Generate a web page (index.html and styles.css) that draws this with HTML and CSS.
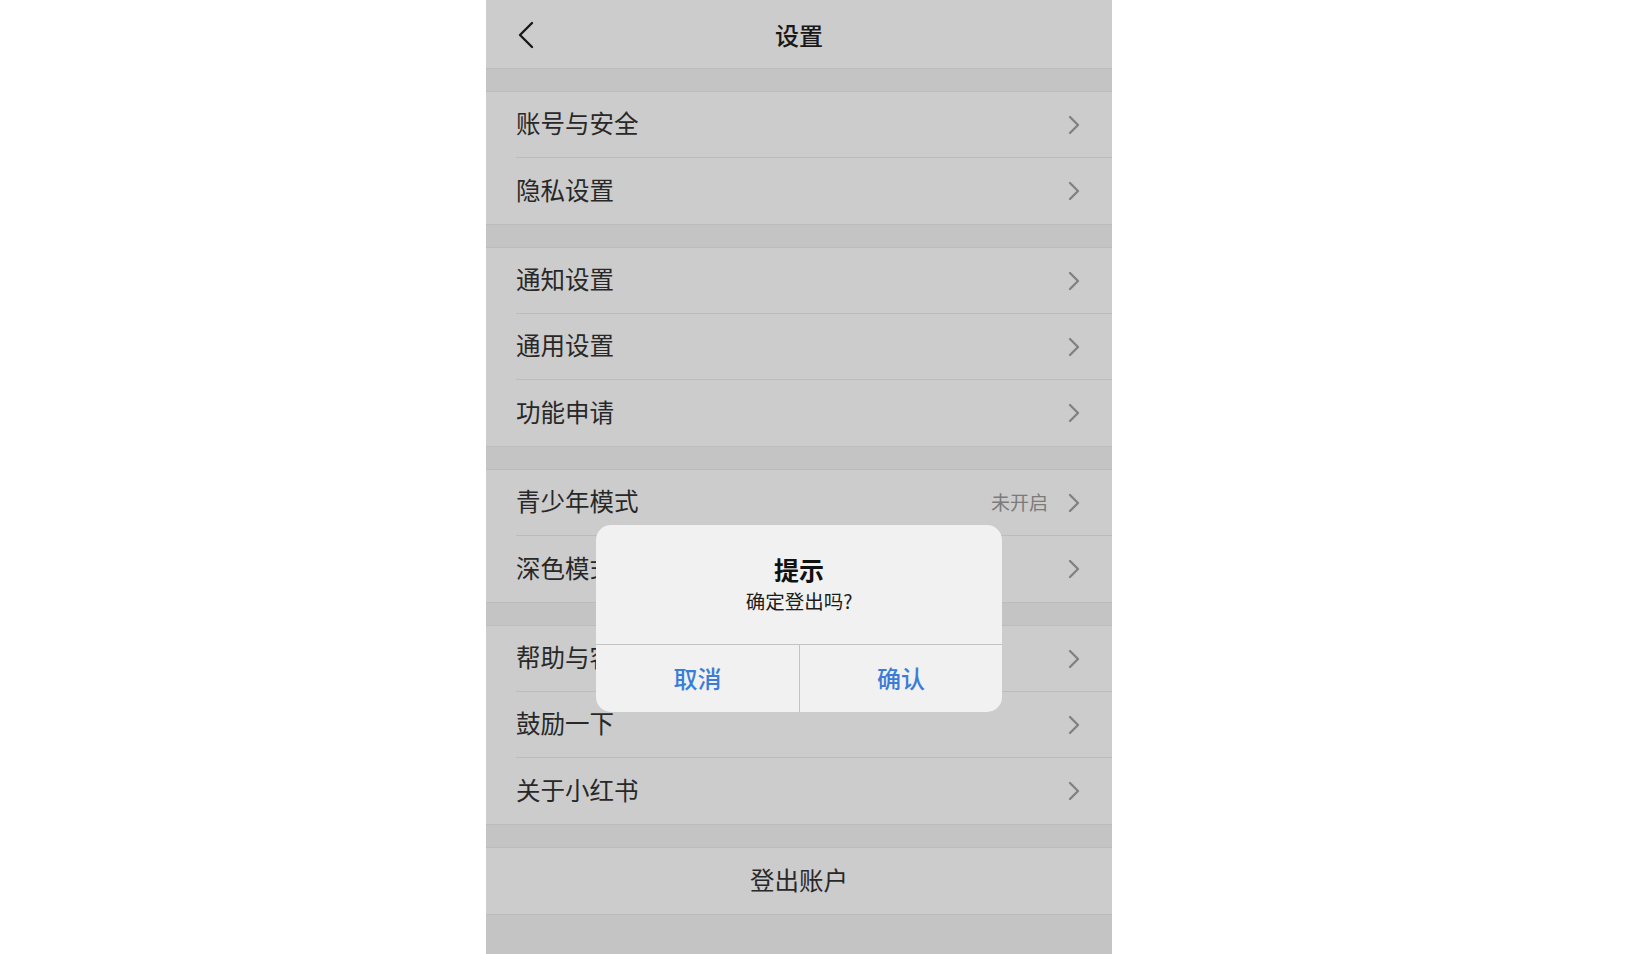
FILE: index.html
```html
<!DOCTYPE html>
<html lang="zh-CN">
<head>
<meta charset="utf-8">
<title>设置</title>
<link rel="stylesheet" href="styles.css">
</head>
<body>
<div class="stage">
  <div class="phone">
    <header class="topbar">
      <div class="topbar-left">
        <svg class="back" width="18" height="28" viewBox="0 0 18 28"><polyline points="15,2 3,14 15,26" fill="none" stroke="#1f1f1f" stroke-width="2.4" stroke-linecap="round" stroke-linejoin="round"/></svg>
      </div>
      <div class="topbar-title">设置</div>
      <div class="topbar-right"></div>
    </header>

    <section class="group">
      <div class="row"><span class="label">账号与安全</span><span class="trail"><svg class="chev" width="12" height="20" viewBox="0 0 12 20"><polyline points="2,2 10,10 2,18" fill="none" stroke="#a2a2a2" stroke-width="2.3" stroke-linecap="round" stroke-linejoin="round"/></svg></span></div>
      <div class="row"><span class="label">隐私设置</span><span class="trail"><svg class="chev" width="12" height="20" viewBox="0 0 12 20"><polyline points="2,2 10,10 2,18" fill="none" stroke="#a2a2a2" stroke-width="2.3" stroke-linecap="round" stroke-linejoin="round"/></svg></span></div>
    </section>

    <section class="group">
      <div class="row"><span class="label">通知设置</span><span class="trail"><svg class="chev" width="12" height="20" viewBox="0 0 12 20"><polyline points="2,2 10,10 2,18" fill="none" stroke="#a2a2a2" stroke-width="2.3" stroke-linecap="round" stroke-linejoin="round"/></svg></span></div>
      <div class="row"><span class="label">通用设置</span><span class="trail"><svg class="chev" width="12" height="20" viewBox="0 0 12 20"><polyline points="2,2 10,10 2,18" fill="none" stroke="#a2a2a2" stroke-width="2.3" stroke-linecap="round" stroke-linejoin="round"/></svg></span></div>
      <div class="row"><span class="label">功能申请</span><span class="trail"><svg class="chev" width="12" height="20" viewBox="0 0 12 20"><polyline points="2,2 10,10 2,18" fill="none" stroke="#a2a2a2" stroke-width="2.3" stroke-linecap="round" stroke-linejoin="round"/></svg></span></div>
    </section>

    <section class="group">
      <div class="row"><span class="label">青少年模式</span><span class="trail"><span class="value">未开启</span><svg class="chev" width="12" height="20" viewBox="0 0 12 20"><polyline points="2,2 10,10 2,18" fill="none" stroke="#a2a2a2" stroke-width="2.3" stroke-linecap="round" stroke-linejoin="round"/></svg></span></div>
      <div class="row"><span class="label">深色模式</span><span class="trail"><svg class="chev" width="12" height="20" viewBox="0 0 12 20"><polyline points="2,2 10,10 2,18" fill="none" stroke="#a2a2a2" stroke-width="2.3" stroke-linecap="round" stroke-linejoin="round"/></svg></span></div>
    </section>

    <section class="group">
      <div class="row"><span class="label">帮助与客服</span><span class="trail"><svg class="chev" width="12" height="20" viewBox="0 0 12 20"><polyline points="2,2 10,10 2,18" fill="none" stroke="#a2a2a2" stroke-width="2.3" stroke-linecap="round" stroke-linejoin="round"/></svg></span></div>
      <div class="row"><span class="label">鼓励一下</span><span class="trail"><svg class="chev" width="12" height="20" viewBox="0 0 12 20"><polyline points="2,2 10,10 2,18" fill="none" stroke="#a2a2a2" stroke-width="2.3" stroke-linecap="round" stroke-linejoin="round"/></svg></span></div>
      <div class="row"><span class="label">关于小红书</span><span class="trail"><svg class="chev" width="12" height="20" viewBox="0 0 12 20"><polyline points="2,2 10,10 2,18" fill="none" stroke="#a2a2a2" stroke-width="2.3" stroke-linecap="round" stroke-linejoin="round"/></svg></span></div>
    </section>

    <section class="group">
      <div class="row row-center"><span class="label">登出账户</span></div>
    </section>

    <div class="mask"></div>

    <div class="dialog">
      <div class="dialog-body">
        <div class="dialog-title">提示</div>
        <div class="dialog-msg">确定登出吗?</div>
      </div>
      <div class="dialog-actions">
        <button class="dialog-btn">取消</button>
        <button class="dialog-btn">确认</button>
      </div>
    </div>
  </div>
</div>
</body>
</html>
```

FILE: styles.css
```css
* { box-sizing: border-box; }

html, body {
  margin: 0;
  padding: 0;
  background: #ffffff;
}

body {
  font-family: "Noto Sans CJK SC", "Noto Sans", sans-serif;
  color: #333333;
}

.stage {
  width: 100%;
  height: 954px;
  display: flex;
  justify-content: flex-start;
  padding-left: 486px;
}

.phone {
  position: relative;
  width: 626px;
  height: 954px;
  background: #f6f6f6;
  overflow: hidden;
}

.topbar {
  height: 69px;
  background: #ffffff;
  border-bottom: 1px solid #ebebeb;
  display: grid;
  grid-template-columns: 1fr auto 1fr;
  align-items: center;
}

.topbar-left {
  padding-left: 31px;
  display: flex;
  align-items: center;
  padding-top: 2px;
}

.topbar-title {
  font-size: 24px;
  font-weight: 500;
  color: #1e1e1e;
  line-height: 30px;
  padding-top: 2px;
}

.group {
  margin-top: 22px;
  background: #ffffff;
  border-top: 1px solid #ebebeb;
  border-bottom: 1px solid #ebebeb;
}

.row {
  height: 66px;
  margin-left: 30px;
  padding-right: 32px;
  display: flex;
  align-items: center;
  justify-content: space-between;
  border-bottom: 1px solid #ececec;
}

.row:last-child {
  border-bottom: none;
}

.label {
  font-size: 24.5px;
  line-height: 30px;
  color: #333333;
  padding-bottom: 3px;
}

.trail {
  display: flex;
  align-items: center;
  gap: 20px;
}

.value {
  font-size: 19px;
  color: #9a9a9a;
  line-height: 24px;
  padding-bottom: 2px;
}

.chev {
  display: block;
}

.row-center {
  margin-left: 0;
  padding-right: 0;
  justify-content: center;
}

.mask {
  position: absolute;
  inset: 0;
  background: rgba(0, 0, 0, 0.2);
}

.dialog {
  position: absolute;
  top: 525px;
  left: 110px;
  width: 406px;
  background: #f1f1f1;
  border-radius: 15px;
  overflow: hidden;
}

.dialog-body {
  padding: 28px 20px 28px;
  text-align: center;
}

.dialog-title {
  font-size: 25px;
  font-weight: 700;
  color: #111111;
  line-height: 33px;
}

.dialog-msg {
  font-size: 19.5px;
  color: #1c1c1c;
  line-height: 30px;
}

.dialog-actions {
  display: grid;
  grid-template-columns: 1fr 1fr;
  border-top: 1px solid #c4c4c4;
}

.dialog-btn {
  height: 67px;
  border: none;
  background: transparent;
  font-family: "Noto Sans CJK SC", "Noto Sans", sans-serif;
  font-size: 24px;
  font-weight: 500;
  color: #3b7dd6;
  padding: 0 0 3px;
}

.dialog-btn + .dialog-btn {
  border-left: 1px solid #c4c4c4;
}
```
